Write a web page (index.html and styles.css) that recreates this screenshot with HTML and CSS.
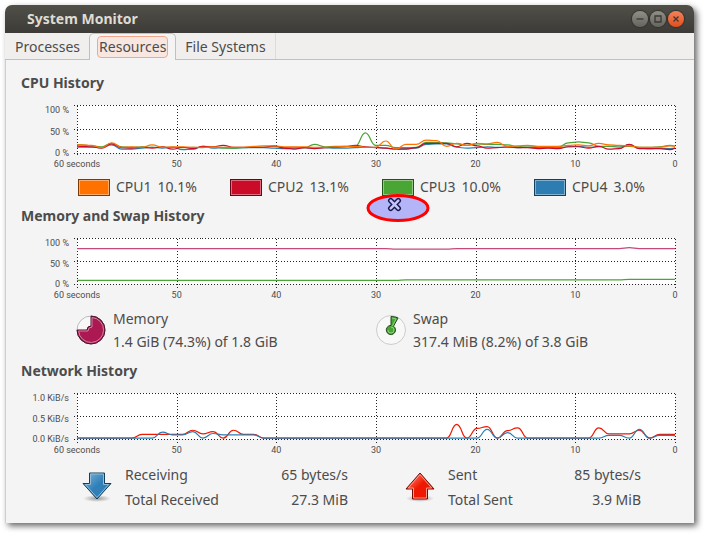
FILE: index.html
```
<!DOCTYPE html>
<html lang="en">
<head>
	<meta charset="UTF-8">
	<title>System Monitor</title>
	<link rel="stylesheet" href="styles.css">
</head>
<body>
<div class="window">
    <header class="title-bar">
        <h1>System Monitor</h1>
        <div class="win-btns">
            <button type="button" aria-label="Minimize">
                <svg viewBox="0 0 16 16"><path d="M4.500 8H11.500"/></svg>
            </button>
            <button type="button" aria-label="Maximize">
                <svg viewBox="0 0 16 16"><path d="M5 5H11V11H5Z"/></svg>
            </button>
            <button type="button" class="close" aria-label="Close">
                <svg viewBox="0 0 16 16"><path d="M5.500 5.500L10.500 10.500M10.500 5.500L5.500 10.500"/></svg>
            </button>
        </div>
    </header>
    <div class="tabs" role="tablist">
        <button type="button" role="tab" class="tab"><span>Processes</span></button>
        <button type="button" role="tab" class="tab current" aria-selected="true"><span>Resources</span></button>
        <button type="button" role="tab" class="tab last"><span>File Systems</span></button>
    </div>
    <main class="content">
        <section class="cpu">
            <h2>CPU History</h2>
            <div class="chart">
                <ul class="y-axis"><li>100 %</li><li>50 %</li><li>0 %</li></ul>
                <svg class="plot" data-chart="cpu"></svg>
                <ul class="x-axis"><li>60 seconds</li><li>50</li><li>40</li><li>30</li><li>20</li><li>10</li><li>0</li></ul>
            </div>
            <ul class="legend">
                <li><button type="button" id="cpu1" class="swatch orange" aria-label="CPU1 color"></button><label for="cpu1">CPU1</label><span>10.1%</span></li>
                <li><button type="button" id="cpu2" class="swatch red" aria-label="CPU2 color"></button><label for="cpu2">CPU2</label><span>13.1%</span></li>
                <li><button type="button" id="cpu3" class="swatch green" aria-label="CPU3 color"></button><label for="cpu3">CPU3</label><span>10.0%</span></li>
                <li><button type="button" id="cpu4" class="swatch blue" aria-label="CPU4 color"></button><label for="cpu4">CPU4</label><span>3.0%</span></li>
            </ul>
            <svg class="marker" viewBox="0 0 64 28">
                <ellipse cx="32" cy="14" rx="30" ry="12.500" fill="#b4b4f8" stroke="#f00" stroke-width="3"/>
                <g fill="none" stroke-linecap="round">
                    <path d="M24.700 6.700L32.300 14.300M32.300 6.700L24.700 14.300" stroke="#16164a" stroke-width="5.400"/>
                    <path d="M24.700 6.700L32.300 14.300M32.300 6.700L24.700 14.300" stroke="#c4c4fa" stroke-width="2.600"/>
                </g>
            </svg>
        </section>

        <section>
            <h2>Memory and Swap History</h2>
            <div class="chart short">
                <ul class="y-axis"><li>100 %</li><li>50 %</li><li>0 %</li></ul>
                <svg class="plot" data-chart="mem"></svg>
                <ul class="x-axis"><li>60 seconds</li><li>50</li><li>40</li><li>30</li><li>20</li><li>10</li><li>0</li></ul>
            </div>
            <div class="memory">
                <div class="usage">
                    <button type="button" class="pie" aria-label="Memory color">
                        <svg viewBox="0 0 30 30">
                            <circle cx="15" cy="15" r="14" fill="#f8f8f8" stroke="#bbb"/>
                            <path d="M15 1A14 14 0 1 1 1 15H11A4 4 0 0 1 15 11Z" fill="#ab1852" stroke="#44152a"/>
                            <path d="M16 2.500A12.500 12.500 0 1 1 2.600 16H12A4 4 0 0 1 16 12Z" fill="none" stroke="#d582a3"/>
                        </svg>
                    </button>
                    <dl><dt>Memory</dt><dd>1.4 GiB (74.3%) of 1.8 GiB</dd></dl>
                </div>
                <div class="usage">
                    <button type="button" class="pie" aria-label="Swap color">
                        <svg viewBox="0 0 30 30">
                            <circle cx="15" cy="15" r="14.500" fill="#f8f8f8" stroke="#ccc"/>
                            <path d="M15 1.500Q19 1.500 22 3L17.500 11.200A4.600 4.600 0 1 1 15 10.400Z" fill="#49a635" stroke="#21481a"/>
                            <path d="M16 3L20 4L16.500 11M12 15A3 3 0 1 0 15 12" fill="none" stroke="#8fd07f"/>
                        </svg>
                    </button>
                    <dl><dt>Swap</dt><dd>317.4 MiB (8.2%) of 3.8 GiB</dd></dl>
                </div>
            </div>
        </section>

        <section>
            <h2>Network History</h2>
            <div class="chart short">
                <ul class="y-axis"><li>1.0 KiB/s</li><li>0.5 KiB/s</li><li>0.0 KiB/s</li></ul>
                <svg class="plot" data-chart="net"></svg>
                <ul class="x-axis"><li>60 seconds</li><li>50</li><li>40</li><li>30</li><li>20</li><li>10</li><li>0</li></ul>
            </div>
            <div class="network">
                <div class="traffic">
                    <button type="button" class="arrow" aria-label="Receiving color">
                        <svg viewBox="0 0 30 30">
                            <defs>
                                <linearGradient id="down" x2="1" y2="1"><stop offset="0" stop-color="#86b7d8"/><stop offset=".5" stop-color="#2f7fb8"/></linearGradient>
                                <radialGradient id="shade"><stop offset="0" stop-color="#999"/><stop offset="1" stop-color="#999" stop-opacity="0"/></radialGradient>
                            </defs>
                            <ellipse cx="15" cy="26.500" rx="14" ry="3.500" fill="url(#shade)"/>
                            <path d="M7.500 1H22.500V11.500H29L15 27L1 11.500H7.500Z" fill="url(#down)" stroke="#173c58"/>
                            <path d="M8.500 2H21.500V12.500H26.700L15 25.500L3.300 12.500H8.500Z" fill="none" stroke="#8fbddb"/>
                        </svg>
                    </button>
                    <dl><dt>Receiving</dt><dd>65 bytes/s</dd><dt>Total Received</dt><dd>27.3 MiB</dd></dl>
                </div>
                <div class="traffic">
                    <button type="button" class="arrow" aria-label="Sent color">
                        <svg viewBox="0 0 30 30">
                            <defs>
                                <linearGradient id="up" x2="1" y2="1"><stop offset="0" stop-color="#ff9a88"/><stop offset=".5" stop-color="#f01800"/></linearGradient>
                            </defs>
                            <ellipse cx="15" cy="26.500" rx="14" ry="3.500" fill="url(#shade)"/>
                            <path d="M15 1L29 17H22.500V27H7.500V17H1Z" fill="url(#up)" stroke="#6e1008"/>
                            <path d="M15 2.600L26.700 16H21.500V26H8.500V16H3.300Z" fill="none" stroke="#ff9888"/>
                        </svg>
                    </button>
                    <dl><dt>Sent</dt><dd>85 bytes/s</dd><dt>Total Sent</dt><dd>3.9 MiB</dd></dl>
                </div>
            </div>
        </section>
    </main>
</div>
<script src="charts.js"></script>
</body>
</html>
```

FILE: styles.css
```
body,dl,dt,dd,ul,li,h1,h2,button{
    margin: 0;
    padding: 0;
}
body{
    background: #fff;
    color: #4c4c4c;
    font: 14px/22px "Noto Sans", "Open Sans", sans-serif;
}
ul{
    list-style: none;
}
button{
    border: none;
    background: none;
    color: inherit;
    font: inherit;
}
svg{
    display: block;
}
.window{
    margin: 5px 10px 11px 5px;
    background: #f4f4f4;
    border-radius: 7px 7px 0 0;
    box-shadow: 3px 3px 6px rgba(0,0,0,.6);
}

/* title bar and tabs */
.title-bar{
    display: flex;
    align-items: center;
    justify-content: space-between;
    height: 28px;
    padding: 0 10px 0 22px;
    background: linear-gradient(#504f48, #3c3b37);
    border-radius: 7px 7px 0 0;
}
.title-bar h1{
    color: #dfdbd2;
    font-size: 14px;
    line-height: 28px;
}
.win-btns{
    display: flex;
    gap: 2px;
}
.win-btns button{
    width: 16px;
    height: 16px;
    border-radius: 50%;
    background: linear-gradient(#918f87, #65645d);
    box-shadow: 0 0 1px 1px #33322e;
}
.win-btns .close{
    background: linear-gradient(#f58259, #e14f1c);
}
.win-btns path{
    fill: none;
    stroke: #3a3935;
    stroke-width: 1.3;
}
.tabs{
    display: flex;
    height: 26px;
    padding-left: 1px;
    background: #f0efee;
    border-bottom: 1px solid #c2c0be;
}
.tab{
    height: 26px;
    padding: 0 9px;
    line-height: 28px;
}
.tab.current{
    height: 27px;
    padding: 0 7px;
    background: #f4f4f4;
    border: 1px solid #c2c0be;
    border-bottom: none;
    border-radius: 5px 5px 0 0;
}
.tab.current span{
    display: block;
    padding: 0 1px;
    line-height: 20px;
    background: #f8e7e1;
    border: 1px solid #f2a78d;
    border-radius: 4px;
}
.tab.last{
    border-right: 1px solid #dddbd9;
}

.content{
    padding: 11px 8px 11px 15px;
    border-left: 1px solid #d0cfcd;
}
section{
    position: relative;
    margin-bottom: 6px;
}
section:last-child{
    margin-bottom: 0;
}
h2{
    font-size: 14px;
    line-height: 24px;
}

/* charts */
.chart{
    display: grid;
    grid-template: 48px 16px / 56px 1fr;
    padding: 10px 11px 7px 0;
    font-family: Roboto, sans-serif;
    font-size: 9px;
    line-height: 10px;
}
.chart.short{
    grid-template-rows: 46px 16px;
}
.y-axis{
    display: flex;
    flex-direction: column;
    justify-content: space-between;
    height: 53px;
    padding-right: 8px;
    text-align: right;
}
.short .y-axis{
    height: 51px;
}
.plot{
    width: 100%;
    height: 100%;
    background: #fff;
    overflow: visible;
}
.plot .grid{
    stroke: #222;
    stroke-dasharray: 1 2;
    shape-rendering: crispEdges;
}
.plot .line{
    fill: none;
    stroke-width: 1.2;
    vector-effect: non-scaling-stroke;
}
.x-axis{
    grid-column: 2;
    display: flex;
    justify-content: space-between;
    padding-top: 6px;
}
.x-axis li{
    display: flex;
    justify-content: center;
    width: 0;
    white-space: nowrap;
}

.legend{
    display: grid;
    grid-template-columns: repeat(4, 1fr);
    margin-left: 57px;
}
.legend li{
    display: flex;
    align-items: center;
    gap: 6px;
}
.swatch{
    width: 32px;
    height: 17px;
    border: 1px solid;
    box-shadow: inset 0 0 0 1px rgba(255,255,255,.4);
}
.orange{
    background: #ff7200;
    border-color: #7d3a05;
}
.red{
    background: #cb0c29;
    border-color: #5e0a18;
}
.green{
    background: #49a635;
    border-color: #24511a;
}
.blue{
    background: #2d7db3;
    border-color: #183e59;
}
.marker{
    position: absolute;
    left: 345px;
    bottom: -24px;
    width: 64px;
    height: 28px;
}

.memory{
    display: grid;
    grid-template-columns: 1fr 1fr;
    padding: 0 10px 0 55px;
    line-height: 23px;
}
.usage{
    display: flex;
    align-items: center;
    gap: 7px;
}
.pie,.arrow{
    flex: none;
    width: 30px;
    height: 30px;
}
.network{
    display: grid;
    grid-template-columns: 266fr 236fr;
    gap: 57px;
    padding: 0 45px 0 61px;
    line-height: 25px;
}
.traffic{
    display: flex;
    align-items: center;
    gap: 13px;
}
.traffic dl{
    flex: 1;
    display: grid;
    grid-template-columns: auto auto;
}
.traffic dd{
    text-align: right;
}
```

FILE: charts.js
```
// values are percent of the plot height, oldest first, one per second
var charts = {
    cpu: [
        {color: "#2d7db3", data: [12,12,12,11,17,8,8,10,12,10,12,7,8,14,10,11,10,11,11,11,10,9,10,11,10,11,10,10,11,12,12,10,8,9,10,18,19,19,12,10,11,13,12,12,11,12,11,11,11,13,14,12,13,14,12,17,10,9,10,9,11]},
        {color: "#49a635", data: [17,17,15,13,20,13,12,13,12,12,12,11,12,11,13,10,10,11,12,12,14,11,12,11,18,13,14,14,14,42,16,16,11,11,12,22,22,21,19,16,19,18,18,17,13,15,13,12,12,21,23,21,14,14,15,14,12,12,13,16,12]},
        {color: "#cb0c29", data: [15,14,13,10,19,11,10,12,10,13,8,12,9,14,13,16,12,12,12,12,15,10,8,11,9,11,12,13,16,13,11,10,8,8,11,20,20,20,13,20,15,10,11,13,11,11,9,10,9,13,13,10,14,8,9,18,9,9,9,7,14]},
        {color: "#ff7200", data: [17,17,16,11,21,12,13,12,17,12,13,13,12,12,13,12,12,12,14,15,15,13,13,13,12,12,13,14,14,12,12,25,8,18,18,27,26,14,20,16,20,19,22,14,15,16,14,14,14,16,17,15,20,17,16,15,12,12,12,15,14]}
    ],
    mem: [
        {color: "#c4487c", data: [77,77,77,77,77,77,77,77,77,77,77,77,77,77,77,77,77,77,77,77,77,77,77,77,77,77,77,77,77,77,77,77,76,76,76,76,76,76,77,77,77,77,77,77,77,77,77,77,77,77,77,77,77,77,77,79,77,77,77,77,77]},
        {color: "#49a635", data: [8,8,8,8,8,8,8,8,8,8,8,8,8,8,8,8,8,8,8,8,8,8,8,8,8,8,8,8,8,8,8,8,8,9,9,9,9,9,9,9,9,9,9,9,9,9,9,9,9,9,9,9,9,9,9,10,10,10,10,10,10]}
    ],
    net: [
        {color: "#f01800", data: [2,2,2,2,2,2,2,10,10,10,10,10,19,11,16,2,19,10,10,2,2,2,2,2,2,2,2,2,2,2,2,2,2,2,2,2,2,2,32,2,23,27,2,18,24,2,2,2,2,2,2,2,24,11,11,11,19,2,10,10,10]},
        {color: "#2d7db3", data: [2,2,2,2,2,2,2,2,2,15,9,9,16,2,12,9,9,9,9,2,2,2,2,2,2,2,2,2,2,2,2,2,2,2,2,2,2,2,2,2,2,21,2,14,2,2,2,2,2,2,2,2,2,8,8,2,21,2,8,8,7]}
    ]
};

var ns = "http://www.w3.org/2000/svg";

function add(parent, name, attrs){
    var el = document.createElementNS(ns, name);
    for(var key in attrs){
        el.setAttribute(key, attrs[key]);
    }
    parent.appendChild(el);
    return el;
}

// smooth curve with flat tangents at each sample
function curve(data){
    var step = 10.15, x = -6, d = "M" + x + " " + (100 - data[0]);
    for(var i = 1; i < data.length; i++){
        var next = x + step, mid = x + step / 2;
        d += "C" + [mid, 100 - data[i - 1], mid, 100 - data[i], next, 100 - data[i]].join(" ");
        x = next;
    }
    return d;
}

document.querySelectorAll(".plot").forEach(function(plot){
    var grid = add(plot, "g", {"class": "grid", transform: "translate(.5 .5)"});
    for(var i = 0; i <= 6; i++){
        var x = i * 100 / 6 + "%";
        add(grid, "line", {x1: x, x2: x, y1: 0, y2: "107%"});
    }
    for(var j = 0; j <= 2; j++){
        add(grid, "line", {x1: -4, x2: "100%", y1: j * 50 + "%", y2: j * 50 + "%"});
    }
    var area = add(plot, "svg", {width: "100%", height: "100%", viewBox: "0 0 598 100", preserveAspectRatio: "none"});
    charts[plot.dataset.chart].forEach(function(line){
        add(area, "path", {"class": "line", stroke: line.color, d: curve(line.data)});
    });
});
```
